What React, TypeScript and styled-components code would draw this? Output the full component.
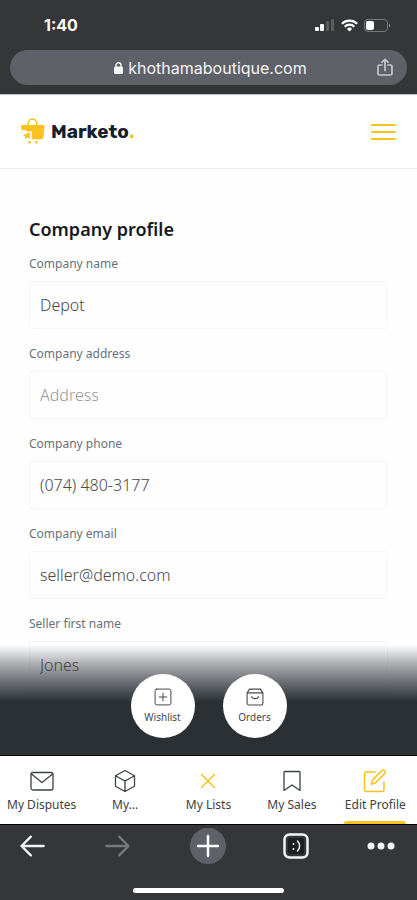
import React from "react";
import styled, { createGlobalStyle } from "styled-components";

const yellow = "#f9c21d";

const GlobalStyle = createGlobalStyle`
  *, *::before, *::after { box-sizing: border-box; }
  body { margin: 0; background: #353638; font-family: "Noto Sans", sans-serif; }
  button, input { font: inherit; margin: 0; }
  button { border: 0; padding: 0; background: none; cursor: pointer; }
`;

const Screen = styled.div`
  display: flex;
  flex-direction: column;
  height: 100vh;
  overflow: hidden;
`;

const BrowserTop = styled.header`
  flex: none;
  padding: 0 10px 9px;
  background: #353638;
  border-bottom: 1px solid #bcbcbe;
`;

const StatusBar = styled.div`
  display: flex;
  align-items: center;
  justify-content: space-between;
  height: 50px;
  padding: 0 16px 0 34px;
  color: #fff;
`;

const Clock = styled.time`
  font: 700 16px/20px Inter, sans-serif;
`;

const StatusIcons = styled.div`
  display: flex;
  align-items: center;
  gap: 6px;
`;

const AddressBar = styled.div`
  display: grid;
  grid-template-columns: 28px 1fr 28px;
  align-items: center;
  height: 35px;
  padding: 0 8px;
  border-radius: 18px;
  background: #5f6168;
  color: #f4f4f5;
`;

const Address = styled.a`
  grid-column: 2;
  display: flex;
  align-items: center;
  justify-content: center;
  gap: 5px;
  padding-left: 4px;
  color: inherit;
  text-decoration: none;
  font: 400 16px/20px Inter, sans-serif;
`;

const ShareButton = styled.button`
  display: grid;
  place-items: center;
  color: #c6c7ca;
`;

const SiteHeader = styled.div`
  flex: none;
  display: flex;
  align-items: center;
  justify-content: space-between;
  height: 74px;
  padding: 0 21px;
  background: #fff;
  border-bottom: 1px solid #ededed;
`;

const Logo = styled.a`
  display: flex;
  align-items: center;
  gap: 5px;
  color: #14202c;
  text-decoration: none;
  font: 700 19px/24px Rubik, Inter, sans-serif;
`;

const LogoDot = styled.span`
  color: ${yellow};
`;

const MenuButton = styled.button`
  display: grid;
  color: ${yellow};
`;

const Viewport = styled.main`
  position: relative;
  flex: 1;
  min-height: 0;
  overflow: hidden;
  background: #fefefe;
`;

const ProfileForm = styled.form`
  display: flex;
  flex-direction: column;
  gap: 16px;
  padding: 50px 29px 0;
`;

const Title = styled.h1`
  margin: 0;
  color: #16191c;
  font-size: 18px;
  font-weight: 600;
  line-height: 20px;
`;

const Field = styled.div`
  display: flex;
  flex-direction: column;
  gap: 8px;
`;

const Label = styled.label`
  color: #66727a;
  font-size: 12px;
  font-weight: 400;
  line-height: 18px;
`;

const Input = styled.input`
  width: 100%;
  height: 48px;
  padding: 0 10px;
  border: 1px solid #f5f5f5;
  border-radius: 4px;
  background: #fefefe;
  color: #47494b;
  font-size: 16px;
  font-weight: 300;
  outline: none;
  &::placeholder { color: #969696; opacity: 1; }
`;

const QuickActions = styled.nav`
  position: absolute;
  right: 0;
  bottom: 0;
  left: 0;
  display: flex;
  justify-content: center;
  gap: 28px;
  padding: 29px 0 17px;
  border-bottom: 1px solid #000;
  background: linear-gradient(
    rgba(42, 48, 53, 0) 0px,
    rgba(60, 63, 70, 0.4) 18px,
    rgba(56, 60, 67, 0.76) 38px,
    #2a3034 57px
  );
`;

const RoundButton = styled.button`
  display: flex;
  flex-direction: column;
  align-items: center;
  gap: 4px;
  width: 64px;
  height: 64px;
  padding-top: 13px;
  border-radius: 50%;
  background: #fff;
  color: #45494c;
  font-size: 10px;
  line-height: 12px;
`;

const TabBar = styled.nav`
  flex: none;
  display: grid;
  grid-template-columns: repeat(5, 1fr);
  height: 69px;
  background: #fff;
  border-bottom: 1px solid #000;
`;

const Tab = styled.a<{ $active?: boolean }>`
  display: flex;
  flex-direction: column;
  align-items: center;
  gap: 3px;
  padding-top: 13px;
  color: #3d4144;
  text-decoration: none;
  white-space: nowrap;
  font-size: 12px;
  line-height: 18px;
  &::after {
    content: "";
    width: 62px;
    height: 3px;
    margin-top: auto;
    border-radius: 3px 3px 0 0;
    background: ${(p) => (p.$active ? yellow : "transparent")};
  }
`;

const TabIcon = styled.span<{ $accent?: boolean }>`
  display: grid;
  color: ${(p) => (p.$accent ? yellow : "#3d4144")};
`;

const BrowserBottom = styled.footer`
  flex: none;
  display: flex;
  flex-direction: column;
  align-items: center;
  justify-content: space-between;
  height: 75px;
  padding: 2px 0 7px;
  background: #353638;
`;

const BrowserTools = styled.div`
  display: flex;
  justify-content: space-between;
  width: 100%;
  padding: 0 22px 0 18px;
`;

const ToolButton = styled.button<{ $tone?: string }>`
  display: grid;
  place-items: center;
  height: 38px;
  color: ${(p) => p.$tone || "#f4f4f4"};
`;

const HomeIndicator = styled.div`
  width: 36%;
  height: 5px;
  border-radius: 3px;
  background: #fff;
`;

const Svg = ({ size = 24, w = 1.5, children }: { size?: number; w?: number; children: React.ReactNode }) => (
  <svg width={size} height={size} viewBox="0 0 24 24" fill="none" stroke="currentColor"
    strokeWidth={w} strokeLinecap="round" strokeLinejoin="round" aria-hidden="true">
    {children}
  </svg>
);

const SignalIcon = () => (
  <svg width="20" height="14" viewBox="0 0 20 14" aria-hidden="true">
    <rect x="0" y="9" width="4" height="4" rx="1" fill="#fff" />
    <rect x="5" y="6" width="4" height="7" rx="1" fill="#fff" />
    <rect x="11" y="3" width="3" height="10" rx="1" fill="#5b5c5e" />
    <rect x="16" y="1" width="3" height="12" rx="1" fill="#5b5c5e" />
  </svg>
);

const WifiIcon = () => (
  <svg width="17" height="13" viewBox="0 0 17 13" fill="none" stroke="#fff" strokeWidth="2.2" aria-hidden="true">
    <path d="M.9 4.8a10.8 10.8 0 0 1 15.2 0" />
    <path d="M3.7 7.7a6.8 6.8 0 0 1 9.6 0" />
    <path d="M5.9 9.9 8.5 12.6l2.6-2.7a3.7 3.7 0 0 0-5.2 0Z" fill="#fff" stroke="none" />
  </svg>
);

const BatteryIcon = () => (
  <svg width="27" height="13" viewBox="0 0 27 13" aria-hidden="true">
    <rect x=".5" y=".5" width="23" height="12" rx="3.5" fill="none" stroke="#77787a" />
    <rect x="2" y="2" width="8" height="9" rx="2" fill="#fff" />
    <path d="M25 4.5c1.5.6 1.5 3.4 0 4Z" fill="#8b8c8e" />
  </svg>
);

const LockIcon = () => (
  <svg width="9" height="12" viewBox="0 0 9 12" aria-hidden="true">
    <rect x="0" y="4.5" width="9" height="7.5" rx="1.5" fill="currentColor" />
    <path d="M2 5V3.3a2.5 2.5 0 0 1 5 0V5" fill="none" stroke="currentColor" strokeWidth="1.4" />
  </svg>
);

const ShareIcon = () => (
  <svg width="16" height="19" viewBox="0 0 16 19" fill="none" stroke="currentColor" strokeWidth="1.7"
    strokeLinecap="round" strokeLinejoin="round" aria-hidden="true">
    <path d="M5 7H2.5A1.5 1.5 0 0 0 1 8.5v7A1.5 1.5 0 0 0 2.5 17h11a1.5 1.5 0 0 0 1.5-1.5v-7A1.5 1.5 0 0 0 13.500 7H11" />
    <path d="M8 12.500V1.500M5 4.200 8 1.300l3 2.900" />
  </svg>
);

const CartLogo = () => (
  <svg width="25" height="27" viewBox="0 0 25 27" aria-hidden="true">
    <path d="M7.200 7V5.200a4.300 4.300 0 0 1 8.600 0V7" fill="none" stroke={yellow} strokeWidth="1.500" />
    <path d="M1 7h21.600a1 1 0 0 1 1 1.200l-.4 2.600-.7 8.400a2.300 2.300 0 0 1-2.300 2.100h-9.400v-7.800H6.300L4.300 12H1.200a1 1 0 0 1-1-1V8a1 1 0 0 1 .8-1Z" fill={yellow} />
    <path d="m1.800 17.200 7-3v6.600l-2.200-1.600-1.200 1.300H3.600l.5-2.600Z" fill={yellow} />
    <circle cx="8.500" cy="24.200" r="1.300" fill={yellow} />
    <circle cx="15.500" cy="24.200" r="1.300" fill={yellow} />
  </svg>
);

const MenuIcon = () => (
  <svg width="25" height="18" viewBox="0 0 25 18" stroke="currentColor" strokeWidth="2" strokeLinecap="round" aria-hidden="true">
    <path d="M1 2h23M1 9h23M1 16h23" />
  </svg>
);

const WishlistIcon = () => (
  <Svg size={20} w={1.2}>
    <rect x="2.500" y="2.500" width="19" height="19" rx="2" />
    <path d="M12 7.500v9M7.500 12h9" />
  </Svg>
);

const OrdersIcon = () => (
  <Svg size={20} w={1.3}>
    <path d="M2.500 7 5.500 2.500h13L21.500 7v12.500a2 2 0 0 1-2 2h-15a2 2 0 0 1-2-2ZM2.500 7h19M8 11.500c.6 3.200 7.400 3.200 8 0" />
  </Svg>
);

const MailIcon = () => (
  <Svg w={1.3}>
    <rect x="1" y="3.500" width="22" height="17.500" rx="2" />
    <path d="m1.500 5 10.500 8.500L22.500 5" />
  </Svg>
);

const BoxIcon = () => (
  <Svg w={1.3}>
    <path d="m12 1.500 9.500 5.200v10.600L12 22.500l-9.500-5.200V6.700ZM2.500 6.700 12 12l9.500-5.300M12 12v10.500" />
  </Svg>
);

const CrossIcon = () => (
  <Svg>
    <path d="m5.500 5.500 13 13M18.500 5.500l-13 13" />
  </Svg>
);

const BookmarkIcon = () => (
  <Svg w={1.3}>
    <path d="M5 2.500h14a1 1 0 0 1 1 1v18L12 16l-8 5.500v-18a1 1 0 0 1 1-1Z" />
  </Svg>
);

const EditIcon = () => (
  <Svg>
    <path d="M12 3H3.500A2 2 0 0 0 1.500 5v15.500a2 2 0 0 0 2 2H19a2 2 0 0 0 2-2V13" />
    <path d="M18.800 1.700a2 2 0 0 1 2.900 2.900L12.500 13.800l-4.200 1.400 1.300-4.300Z" />
  </Svg>
);

const fields = [
  { id: "company-name", label: "Company name", value: "Depot", type: "text" },
  { id: "company-address", label: "Company address", value: "", placeholder: "Address", type: "text" },
  { id: "company-phone", label: "Company phone", value: "(074) 480-3177", type: "tel" },
  { id: "company-email", label: "Company email", value: "seller@demo.com", type: "email" },
  { id: "first-name", label: "Seller first name", value: "Jones", type: "text" },
];

const tabs = [
  { label: "My Disputes", icon: <MailIcon /> },
  { label: "My...", icon: <BoxIcon /> },
  { label: "My Lists", icon: <CrossIcon />, accent: true },
  { label: "My Sales", icon: <BookmarkIcon /> },
  { label: "Edit Profile", icon: <EditIcon />, accent: true, active: true },
];

export default function App() {
  return (
    <Screen>
      <GlobalStyle />
      <BrowserTop>
        <StatusBar>
          <Clock>1:40</Clock>
          <StatusIcons>
            <SignalIcon />
            <WifiIcon />
            <BatteryIcon />
          </StatusIcons>
        </StatusBar>
        <AddressBar>
          <Address href="#">
            <LockIcon />
            khothamaboutique.com
          </Address>
          <ShareButton aria-label="Share"><ShareIcon /></ShareButton>
        </AddressBar>
      </BrowserTop>

      <SiteHeader>
        <Logo href="#">
          <CartLogo />
          <span>Marketo<LogoDot>.</LogoDot></span>
        </Logo>
        <MenuButton aria-label="Menu"><MenuIcon /></MenuButton>
      </SiteHeader>

      <Viewport>
        <ProfileForm>
          <Title>Company profile</Title>
          {fields.map((f) => (
            <Field key={f.id}>
              <Label htmlFor={f.id}>{f.label}</Label>
              <Input id={f.id} type={f.type} defaultValue={f.value} placeholder={f.placeholder} />
            </Field>
          ))}
        </ProfileForm>
        <QuickActions>
          <RoundButton><WishlistIcon />Wishlist</RoundButton>
          <RoundButton><OrdersIcon />Orders</RoundButton>
        </QuickActions>
      </Viewport>

      <TabBar>
        {tabs.map((t) => (
          <Tab key={t.label} href="#" $active={t.active}>
            <TabIcon $accent={t.accent}>{t.icon}</TabIcon>
            {t.label}
          </Tab>
        ))}
      </TabBar>

      <BrowserBottom>
        <BrowserTools>
          <ToolButton aria-label="Back">
            <Svg size={28} w={2}><path d="M22 12H3M11 4l-8 8 8 8" /></Svg>
          </ToolButton>
          <ToolButton aria-label="Forward" $tone="#77787a">
            <Svg size={28} w={2}><path d="M2 12h19M13 4l8 8-8 8" /></Svg>
          </ToolButton>
          <ToolButton aria-label="New tab">
            <svg width="36" height="36" viewBox="0 0 36 36" aria-hidden="true">
              <circle cx="18" cy="18" r="18" fill="#5f6168" />
              <path d="M18 8v20M8 18h20" stroke="#fff" strokeWidth="2.500" strokeLinecap="round" />
            </svg>
          </ToolButton>
          <ToolButton aria-label="Tabs">
            <svg width="26" height="26" viewBox="0 0 26 26" fill="none" stroke="currentColor" strokeLinecap="round" aria-hidden="true">
              <rect x="1.500" y="1.500" width="23" height="23" rx="5" strokeWidth="2.500" />
              <rect x="5" y="5" width="16" height="16" rx="2" fill="#1d1e20" stroke="none" />
              <path d="M14.500 8c2.800 2.800 2.800 7.200 0 10" strokeWidth="1.500" />
              <circle cx="10.500" cy="11" r="1" fill="currentColor" stroke="none" />
              <circle cx="10.500" cy="16" r="1" fill="currentColor" stroke="none" />
            </svg>
          </ToolButton>
          <ToolButton aria-label="More">
            <svg width="28" height="8" viewBox="0 0 28 8" fill="currentColor" aria-hidden="true">
              <circle cx="4" cy="4" r="3.500" />
              <circle cx="14" cy="4" r="3.500" />
              <circle cx="24" cy="4" r="3.500" />
            </svg>
          </ToolButton>
        </BrowserTools>
        <HomeIndicator />
      </BrowserBottom>
    </Screen>
  );
}
